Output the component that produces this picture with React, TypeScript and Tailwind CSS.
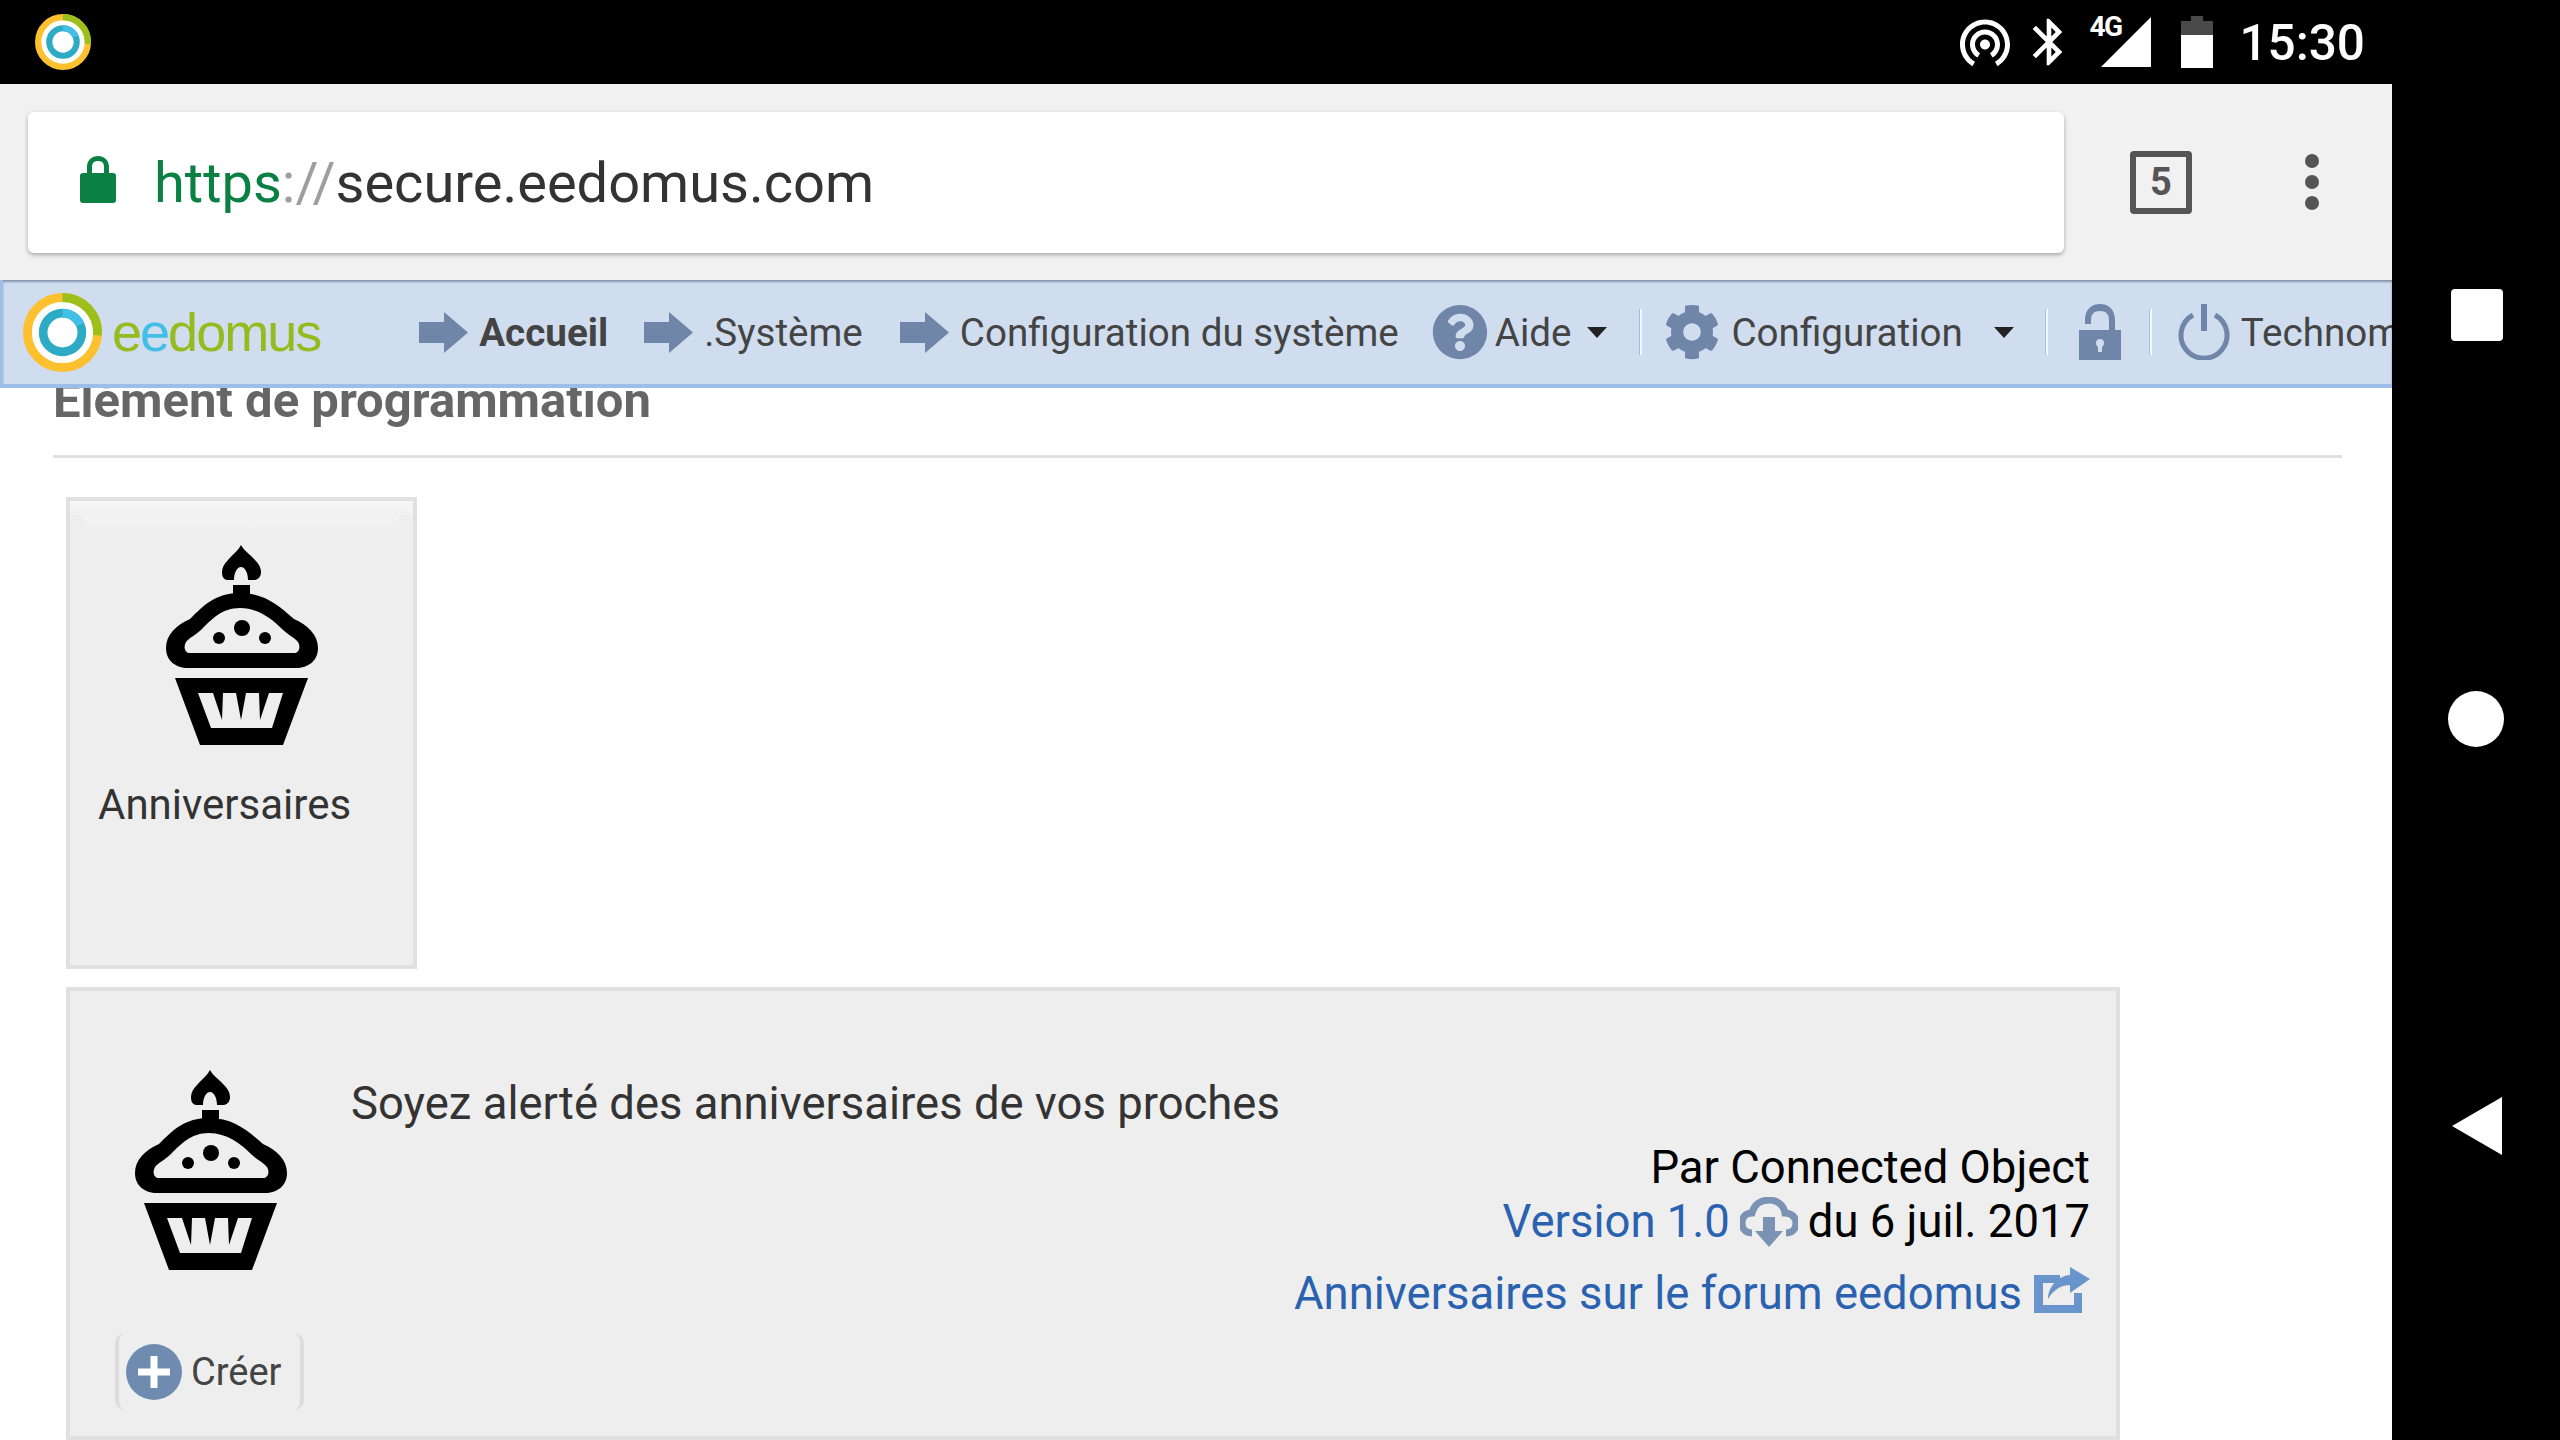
import { ReactNode } from 'react';
import { FaCog, FaQuestionCircle } from 'react-icons/fa';
import { MdBluetooth, MdWifiTethering } from 'react-icons/md';

function LogoRing({ className }: { className: string }) {
  return (
    <svg viewBox="0 0 80 80" className={className}>
      <circle cx="40" cy="40" r="33" fill="#fff" />
      <circle cx="40" cy="40" r="35.5" fill="none" stroke="#fdc02f" strokeWidth="9" />
      <path d="M40 4.5A35.5 35.5 0 0 1 75.4 43" fill="none" stroke="#9cbf1c" strokeWidth="9" />
      <circle cx="40" cy="40" r="19.6" fill="none" stroke="#2dabc5" strokeWidth="8.8" />
      <path d="M40 20.4A19.6 19.6 0 0 1 58 32" fill="none" stroke="#41bfe6" strokeWidth="8.8" />
    </svg>
  );
}

function Cupcake({ className }: { className: string }) {
  return (
    <svg viewBox="0 0 152 200" className={className}>
      <path d="M75 0C78 6 84 9 89 15C93 19 95 23 95 27C95 31 93 34 89 35L82 35C82 28 79 22 75 22C71 22 68 28 68 35L61 35C57 34 56 31 56 27C56 23 58 19 62 15C67 9 72 6 75 0Z" fill="#000" />
      <rect x="67" y="40" width="17" height="12" fill="#000" />
      <path
        fillRule="evenodd"
        fill="#000"
        d="M74 48C50 48 38 60 24 74C10 80 0 90 0 103C0 116 10 123 22 123H130C142 123 152 116 152 103C152 90 142 80 128 74C112 60 98 48 74 48ZM74 63C56 63 46 74 36 84C30 90 24 92 20 97C17 102 19 108 24 108H128C133 108 135 102 132 97C128 92 122 90 116 84C106 74 92 63 74 63Z"
      />
      <circle cx="76" cy="83" r="8" fill="#000" />
      <circle cx="53" cy="93" r="6" fill="#000" />
      <circle cx="99" cy="93" r="6" fill="#000" />
      <path
        fillRule="evenodd"
        fill="#000"
        d="M9 133H142L117 200H34ZM32 148L45 183H106L117 148Z"
      />
      <path d="M47 148H57L56 175ZM70 148H80L75 175ZM93 148H103L94 175Z" fill="#000" />
    </svg>
  );
}

function NavArrow() {
  return (
    <svg viewBox="0 0 49 41" className="w-[49px] h-[41px] shrink-0">
      <path d="M0 10H25V0L49 20.5L25 41V31H0Z" fill="#6f86a8" />
    </svg>
  );
}

function Caret() {
  return (
    <svg viewBox="0 0 20 11" className="w-[20px] h-[11px] shrink-0">
      <path d="M0 0H20L10 11Z" fill="#222" />
    </svg>
  );
}

function NavSep() {
  return <div className="w-[3px] h-[46px] bg-[#f3f7fc] border-l border-[#9ebde8] shrink-0" />;
}

function NavText({ className, children }: { className: string; children: ReactNode }) {
  return <span className={`pt-[3px] ${className}`}>{children}</span>;
}

export default function App() {
  return (
    <div className="w-[2560px] h-[1440px] flex bg-black overflow-hidden font-['Roboto',sans-serif]">
      <div className="w-[2392px] h-full flex flex-col bg-white">
        {/* status bar */}
        <div className="h-[84px] bg-black flex items-center pl-[35px] pr-[27px] shrink-0">
          <LogoRing className="w-[56px] h-[56px]" />
          <div className="ml-auto flex items-center text-white">
            <MdWifiTethering className="w-[60px] h-[60px]" />
            <MdBluetooth className="w-[56px] h-[56px] ml-[6px]" />
            <div className="relative w-[72px] h-[60px] ml-[2px]">
              <span className="absolute left-[10px] top-[1px] text-[28px] leading-[28px] font-bold tracking-[-1.5px]">4G</span>
              <svg viewBox="0 0 50 50" className="absolute right-[0px] top-[5px] w-[50px] h-[50px]">
                <path d="M50 0V50H0Z" fill="#fff" />
              </svg>
            </div>
            <svg viewBox="0 0 32 52" className="w-[32px] h-[52px] ml-[30px]">
              <path d="M10 0H22V5H32V19H0V5H10Z" fill="#4a4a4a" />
              <rect x="0" y="19" width="32" height="33" fill="#fff" />
            </svg>
            <span className="ml-[26px] pt-[4px] text-[49.5px] leading-none font-medium">15:30</span>
          </div>
        </div>

        {/* browser toolbar */}
        <div className="h-[196px] bg-[#f1f1f1] flex items-center pl-[28px] shrink-0">
          <div className="w-[2036px] h-[141px] bg-white rounded-[6px] shadow-[0_2px_4px_rgba(0,0,0,0.3)] flex items-center pl-[52px]">
            <svg viewBox="0 0 36 47" className="w-[36px] h-[47px] shrink-0 -mt-[6px]">
              <path fillRule="evenodd" d="M3 17H7V11C7 4 12 0 18 0C24 0 29 4 29 11V17H33C35 17 36 18 36 20V44C36 46 35 47 33 47H3C1 47 0 46 0 44V20C0 18 1 17 3 17ZM12 17H24V11C24 7 22 5 18 5C14 5 12 7 12 11Z" fill="#0b8043" />
            </svg>
            <div className="ml-[38px] pt-[2px] text-[56px] leading-none text-[#333]">
              <span className="text-[#0b8043]">https</span>
              <span className="text-[#9e9e9e]">://</span>
              secure.eedomus.com
            </div>
          </div>
          <div className="ml-[66px] w-[62px] h-[63px] border-[6px] border-[#555] rounded-[4px] flex items-center justify-center text-[#555] text-[38px] font-bold leading-none">
            5
          </div>
          <div className="ml-[113px] flex flex-col gap-[7px]">
            <div className="w-[14px] h-[14px] rounded-full bg-[#555]" />
            <div className="w-[14px] h-[14px] rounded-full bg-[#555]" />
            <div className="w-[14px] h-[14px] rounded-full bg-[#555]" />
          </div>
        </div>

        {/* site menu */}
        <div className="relative z-10 h-[108px] shrink-0 bg-[#d0ddef] border-l-[3px] border-b-[4px] border-[#9ebde8] shadow-[inset_0_2px_2px_rgba(70,90,120,0.55)] flex items-center pl-[20px] overflow-hidden whitespace-nowrap text-[38.6px] leading-none text-[#444]">
          <LogoRing className="w-[79px] h-[79px] shrink-0" />
          <span className="ml-[10px] font-['Liberation_Sans',sans-serif] text-[54px] tracking-[-2px] text-[#95bb1f]">
            e<span className="text-[#41bfe6]">e</span>domus
          </span>
          <div className="ml-[99px]"><NavArrow /></div>
          <NavText className="ml-[11px] font-bold">Accueil</NavText>
          <div className="ml-[36px]"><NavArrow /></div>
          <NavText className="ml-[11px]">.Système</NavText>
          <div className="ml-[37px]"><NavArrow /></div>
          <NavText className="ml-[11px]">Configuration du système</NavText>
          <FaQuestionCircle className="ml-[33px] w-[56px] h-[56px] shrink-0 text-[#6f86a8]" />
          <NavText className="ml-[7px]">Aide</NavText>
          <div className="ml-[15px]"><Caret /></div>
          <div className="ml-[32px]"><NavSep /></div>
          <FaCog className="ml-[22px] w-[56px] h-[56px] shrink-0 text-[#6f86a8]" />
          <NavText className="ml-[12px]">Configuration</NavText>
          <div className="ml-[31px]"><Caret /></div>
          <div className="ml-[31px]"><NavSep /></div>
          <svg viewBox="0 0 42 56" className="ml-[31px] w-[42px] h-[56px] shrink-0">
            <path fillRule="evenodd" d="M0 26H30V16C30 10 27 7 21 7C15 7 12 10 12 16V20H6V16C6 6 12 0 21 0C30 0 36 6 36 16V26H42V56H0ZM21 35C18 35 17 37 17 39C17 41 18 42 19 43V48H23V43C24 42 25 41 25 39C25 37 24 35 21 35Z" fill="#6f86a8" />
          </svg>
          <div className="ml-[28px]"><NavSep /></div>
          <svg viewBox="0 0 54 56" className="ml-[25px] w-[54px] h-[56px] shrink-0">
            <path d="M16 11A23 23 0 1 0 38 11" fill="none" stroke="#6f86a8" strokeWidth="5" />
            <path d="M27 0V27" fill="none" stroke="#6f86a8" strokeWidth="6" />
          </svg>
          <NavText className="ml-[10px]">Technomatique</NavText>
        </div>

        {/* page content */}
        <div className="flex-1 min-h-0 overflow-hidden px-[50px]">
          <h1 className="-mt-[14px] pl-[3px] text-[49px] leading-[54px] font-bold text-[#666]">Elément de programmation</h1>
          <div className="mt-[27px] ml-[3px] w-[2289px] h-[3px] bg-[#e0e0e0]" />

          <div className="mt-[39px] ml-[16px] w-[351px] h-[472px] border-[4px] border-[#e0e0e0] bg-[#eeeeee] flex flex-col">
            <div className="h-[14px] shrink-0 bg-gradient-to-b from-[#f7f7f7] to-[#f1f1f1]" />
            <div className="h-[18px] shrink-0 mx-[14px] bg-gradient-to-b from-[#f4f4f4] to-[#eeeeee]" />
            <Cupcake className="w-[152px] h-[200px] ml-[96px] mt-[12px] shrink-0" />
            <span className="ml-[28px] mt-[35px] text-[42px] leading-[50px] text-[#333]">Anniversaires</span>
          </div>

          <div className="mt-[18px] ml-[16px] w-[2054px] h-[453px] border-[4px] border-[#e0e0e0] bg-[#eeeeee] flex">
            <div className="w-[281px] shrink-0 flex flex-col pl-[45px]">
              <Cupcake className="w-[152px] h-[200px] ml-[20px] mt-[79px] shrink-0" />
              <div className="mt-[63px] w-[189px] h-[77px] flex items-center pl-[7px] gap-[9px] border-x-[4px] border-[#dcdcdc] rounded-[10px] text-[38px] leading-none text-[#444]">
                <svg viewBox="0 0 56 56" className="w-[56px] h-[56px] shrink-0">
                  <circle cx="28" cy="28" r="28" fill="#6f8cb0" />
                  <path d="M28 12V44M12 28H44" stroke="#fff" strokeWidth="7" fill="none" />
                </svg>
                <span>Créer</span>
              </div>
            </div>
            <div className="flex-1 min-w-0 flex flex-col pr-[26px] text-[45.45px] leading-[54px] text-black">
              <p className="mt-[86px] text-[#333]">Soyez alerté des anniversaires de vos proches</p>
              <p className="text-right mt-[10px]">Par Connected Object</p>
              <div className="flex items-center justify-end">
                <span className="text-[#2a62b0]">Version 1.0</span>
                <svg viewBox="0 0 58 50" className="ml-[10px] w-[58px] h-[50px]">
                  <path d="M12 36C4 36 2 30 2 26C2 20 6 16 12 16C14 8 20 3 29 3C38 3 44 9 45 16C51 16 56 20 56 26C56 32 52 36 46 36" fill="none" stroke="#7a93b4" strokeWidth="7" />
                  <path d="M23 20H35V34H43L29 50L15 34H23Z" fill="#7a93b4" />
                </svg>
                <span className="ml-[10px]">du 6 juil. 2017</span>
              </div>
              <div className="flex items-center justify-end mt-[18px] text-[#2a62b0]">
                <span>Anniversaires sur le forum eedomus</span>
                <svg viewBox="0 0 56 46" className="ml-[12px] w-[56px] h-[46px] -mt-[8px]">
                  <path d="M0 8H26V16H9V38H40V26H48V46H0Z" fill="#6a94cc" />
                  <path d="M36 0L56 12L36 26V18C28 18 20 22 14 32C14 20 24 9 36 8Z" fill="#6a94cc" />
                </svg>
              </div>
            </div>
          </div>
        </div>
      </div>

      {/* android nav buttons */}
      <div className="w-[168px] h-full flex flex-col items-center pl-[1px] text-white">
        <div className="mt-[289px] w-[52px] h-[52px] rounded-[4px] bg-white" />
        <div className="mt-[350px] -ml-[2px] w-[56px] h-[56px] rounded-full bg-white" />
        <svg viewBox="0 0 50 58" className="mt-[350px] w-[50px] h-[58px]">
          <path d="M50 0V58L0 29Z" fill="#fff" />
        </svg>
      </div>
    </div>
  );
}
